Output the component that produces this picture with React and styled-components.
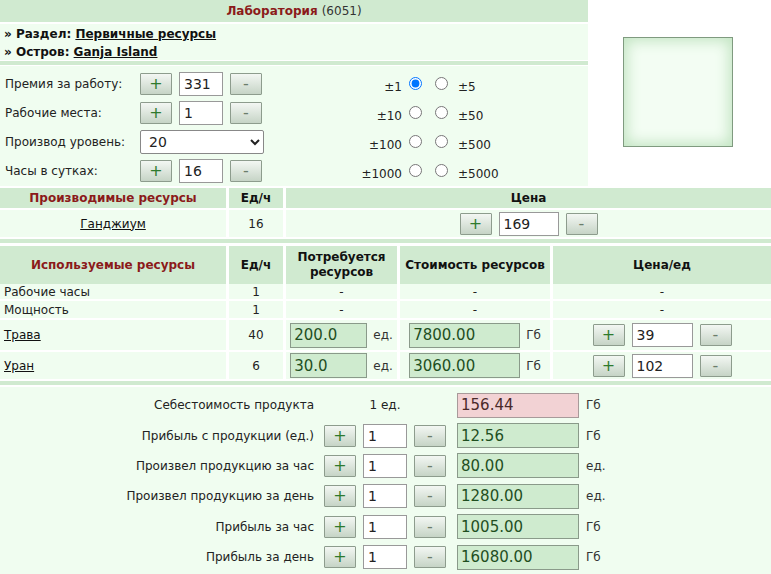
import React from 'react';
import styled, { createGlobalStyle } from 'styled-components';

const HEAD = '#d0ead0';
const LIGHT = '#f0fdf0';

const GlobalStyle = createGlobalStyle`
  html, body {
    margin: 0;
    padding: 0;
    background: #fff;
  }
  body {
    font-family: "DejaVu Sans", Verdana, sans-serif;
    font-size: 12px;
    color: #222;
  }
`;

const Page = styled.div`
  display: flex;
  flex-direction: column;
  width: 100%;
  min-height: 574px;
`;

const Top = styled.div`
  display: flex;
  height: 186px;
`;

const LeftBlock = styled.div`
  width: 588px;
  display: flex;
  flex-direction: column;
`;

const TitleBar = styled.div`
  height: 22px;
  background: ${HEAD};
  display: flex;
  align-items: center;
  justify-content: center;
`;

const TitleName = styled.b`
  color: #8b1a1a;
`;

const TitleCount = styled.span`
  color: #333;
  margin-left: 4px;
`;

const Info = styled.div`
  margin-top: 2px;
  height: 36px;
  background: ${LIGHT};
  padding: 1px 4px 0;
  box-sizing: border-box;
  line-height: 18px;
  font-weight: bold;
  color: #111;
`;

const Link = styled.a`
  color: #111;
  text-decoration: underline;
  cursor: pointer;
`;

const Sep = styled.div`
  height: 4px;
  background: ${HEAD};
  margin: ${(p) => p.$m || '1px 0'};
`;

const Controls = styled.div`
  flex: 1;
  background: ${LIGHT};
  display: flex;
  padding-top: 3px;
`;

const Fields = styled.div`
  width: 290px;
  display: grid;
  grid-auto-rows: 29px;
  align-content: start;
`;

const FieldRow = styled.div`
  display: flex;
  align-items: center;
`;

const FieldLabel = styled.div`
  width: 140px;
  padding-left: 5px;
  box-sizing: border-box;
`;

const Stepper = styled.div`
  display: flex;
  align-items: center;
  gap: 7px;
`;

const Btn = styled.button`
  width: 32px;
  height: 22px;
  padding: 0;
  border: 1px solid #8d9c8d;
  border-radius: 1px;
  background: linear-gradient(#f3f7f3, #c6d4c6);
  font-family: "DejaVu Sans", Verdana, sans-serif;
  font-size: 16px;
  line-height: 18px;
  color: ${(p) => (p.$minus ? '#6b7d6b' : '#2e7a2e')};
  cursor: pointer;
`;

const NumInput = styled.input`
  width: ${(p) => p.$w || 44}px;
  height: 24px;
  box-sizing: border-box;
  border: 1px solid #999;
  background: #fff;
  padding: 0 4px;
  font-family: "DejaVu Sans", Verdana, sans-serif;
  font-size: 14px;
  color: #222;
  outline: none;
`;

const LevelSelect = styled.select`
  width: 124px;
  height: 24px;
  box-sizing: border-box;
  border: 1px solid #888;
  border-radius: 2px;
  background: #fff;
  padding: 0 4px;
  font-family: "DejaVu Sans", Verdana, sans-serif;
  font-size: 14px;
  color: #222;
`;

const Radios = styled.div`
  margin-left: 56px;
  display: grid;
  grid-template-columns: 56px 26px 26px 60px;
  grid-auto-rows: 29px;
  align-content: start;
`;

const RadioText = styled.span`
  display: flex;
  align-items: center;
  justify-content: ${(p) => (p.$right ? 'flex-end' : 'flex-start')};
  padding-top: 6px;
  padding-left: ${(p) => (p.$right ? 0 : 4)}px;
`;

const RadioCell = styled.label`
  display: flex;
  align-items: center;
  justify-content: center;

  input {
    margin: 0;
    width: 13px;
    height: 13px;
  }
`;

const ImageCell = styled.div`
  flex: 1;
  display: flex;
  align-items: center;
  justify-content: center;
  background: #fff;
`;

const Picture = styled.div`
  width: 110px;
  height: 110px;
  box-sizing: border-box;
  border: 1px solid #7f9a7f;
  background: #f3fdf3;
  box-shadow: inset 0 0 14px 3px #c2e4c2;
  margin-right: 3px;
  margin-bottom: 3px;
`;

const Row = styled.div`
  display: grid;
  grid-template-columns: ${(p) => p.$cols};
  column-gap: ${(p) => p.$gap || 3}px;
  height: ${(p) => p.$h}px;
  margin-top: ${(p) => (p.$mt === undefined ? 2 : p.$mt)}px;
`;

const HeadCell = styled.div`
  background: ${HEAD};
  display: flex;
  align-items: center;
  justify-content: center;
  text-align: center;
  font-weight: bold;
  line-height: 15px;
  color: ${(p) => (p.$red ? '#8b1a1a' : '#111')};
`;

const Cell = styled.div`
  background: ${LIGHT};
  display: flex;
  align-items: center;
  justify-content: ${(p) => p.$align || 'center'};
  padding: 0 ${(p) => (p.$align === 'flex-start' ? 4 : 0)}px;
`;

const ValueBox = styled.div`
  width: ${(p) => p.$w}px;
  height: 25px;
  box-sizing: border-box;
  border: 1px solid ${(p) => (p.$pink ? '#a89a9a' : '#8a9a8a')};
  background: ${(p) => (p.$pink ? '#f2d2d4' : '#cfebcf')};
  color: ${(p) => (p.$pink ? '#4a2a2a' : '#1f4f1f')};
  display: flex;
  align-items: center;
  padding-left: 3px;
  font-size: 15px;
`;

const Unit = styled.span`
  margin-left: ${(p) => p.$ml || 6}px;
  color: #333;
`;

const Bottom = styled.div`
  flex: 1;
  background: ${LIGHT};
  margin-top: 2px;
  padding-top: 3px;
`;

const CalcRow = styled.div`
  display: grid;
  grid-template-columns: 316px 134px 126px 1fr;
  column-gap: 2px;
  height: 30.4px;
  align-items: center;
`;

const CalcLabel = styled.div`
  text-align: right;
  padding-right: 2px;
`;

const CalcControls = styled.div`
  display: flex;
  justify-content: center;
  align-items: center;
  gap: 7px;
`;

const CalcValue = styled.div`
  padding-left: 3px;
`;

const Plain = styled.span`
  color: #222;
`;

const fields = [
  { label: 'Премия за работу:', value: '331' },
  { label: 'Рабочие места:', value: '1' },
  { label: 'Производ уровень:', select: '20' },
  { label: 'Часы в сутках:', value: '16' },
];

const steps = [
  ['1', '5'],
  ['10', '50'],
  ['100', '500'],
  ['1000', '5000'],
];

const used = [
  { name: 'Рабочие часы', rate: '1', h: 15, mt: 0 },
  { name: 'Мощность', rate: '1', h: 17 },
  { name: 'Трава', rate: '40', link: true, need: '200.0', cost: '7800.00', price: '39', h: 30 },
  { name: 'Уран', rate: '6', link: true, need: '30.0', cost: '3060.00', price: '102', h: 27 },
];

const calc = [
  { label: 'Себестоимость продукта', fixed: true, value: '156.44', unit: 'Гб', pink: true },
  { label: 'Прибыль с продукции (ед.)', value: '12.56', unit: 'Гб' },
  { label: 'Произвел продукцию за час', value: '80.00', unit: 'ед.' },
  { label: 'Произвел продукцию за день', value: '1280.00', unit: 'ед.' },
  { label: 'Прибыль за час', value: '1005.00', unit: 'Гб' },
  { label: 'Прибыль за день', value: '16080.00', unit: 'Гб' },
];

const Step = ({ value, w }) => (
  <Stepper>
    <Btn type="button">+</Btn>
    <NumInput defaultValue={value} $w={w} />
    <Btn type="button" $minus>-</Btn>
  </Stepper>
);

const USED_COLS = '226px 54px 111px 150px 1fr';

export default function App() {
  return (
    <Page>
      <GlobalStyle />
      <Top>
        <LeftBlock>
          <TitleBar>
            <TitleName>Лаборатория</TitleName>
            <TitleCount>(6051)</TitleCount>
          </TitleBar>
          <Info>
            <div>» Раздел: <Link>Первичные ресурсы</Link></div>
            <div>» Остров: <Link>Ganja Island</Link></div>
          </Info>
          <Sep />
          <Controls>
            <Fields>
              {fields.map((f) => (
                <FieldRow key={f.label}>
                  <FieldLabel>{f.label}</FieldLabel>
                  {f.select ? (
                    <LevelSelect defaultValue={f.select}>
                      {Array.from({ length: 20 }, (_, i) => (
                        <option key={i} value={String(i + 1)}>{i + 1}</option>
                      ))}
                    </LevelSelect>
                  ) : (
                    <Step value={f.value} />
                  )}
                </FieldRow>
              ))}
            </Fields>
            <Radios>
              {steps.map(([a, b]) => (
                <React.Fragment key={a}>
                  <RadioText $right>±{a}</RadioText>
                  <RadioCell><input type="radio" name="step" defaultChecked={a === '1'} /></RadioCell>
                  <RadioCell><input type="radio" name="step" /></RadioCell>
                  <RadioText>±{b}</RadioText>
                </React.Fragment>
              ))}
            </Radios>
          </Controls>
        </LeftBlock>
        <ImageCell>
          <Picture />
        </ImageCell>
      </Top>

      <Row $cols="226px 54px 1fr" $h={20}>
        <HeadCell $red>Производимые ресурсы</HeadCell>
        <HeadCell>Ед/ч</HeadCell>
        <HeadCell>Цена</HeadCell>
      </Row>
      <Row $cols="226px 54px 1fr" $h={27}>
        <Cell><Link as="span">Ганджиум</Link></Cell>
        <Cell>16</Cell>
        <Cell><Step value="169" w={60} /></Cell>
      </Row>

      <Sep $m="2px 0 1px" />

      <Row $cols={USED_COLS} $h={38}>
        <HeadCell $red>Используемые ресурсы</HeadCell>
        <HeadCell>Ед/ч</HeadCell>
        <HeadCell>Потребуется<br />ресурсов</HeadCell>
        <HeadCell>Стоимость ресурсов</HeadCell>
        <HeadCell>Цена/ед</HeadCell>
      </Row>
      {used.map((r) => (
        <Row key={r.name} $cols={USED_COLS} $h={r.h} $mt={r.mt}>
          <Cell $align="flex-start">
            {r.link ? <Link as="span">{r.name}</Link> : <Plain>{r.name}</Plain>}
          </Cell>
          <Cell>{r.rate}</Cell>
          {r.need ? (
            <>
              <Cell><ValueBox $w={77}>{r.need}</ValueBox><Unit>ед.</Unit></Cell>
              <Cell><ValueBox $w={111}>{r.cost}</ValueBox><Unit>Гб</Unit></Cell>
              <Cell><Step value={r.price} w={61} /></Cell>
            </>
          ) : (
            <>
              <Cell>-</Cell>
              <Cell>-</Cell>
              <Cell>-</Cell>
            </>
          )}
        </Row>
      ))}

      <Sep $m="2px 0 0" />

      <Bottom>
        {calc.map((c) => (
          <CalcRow key={c.label}>
            <CalcLabel>{c.label}</CalcLabel>
            <CalcControls>
              {c.fixed ? <span>1 ед.</span> : <Step value="1" />}
            </CalcControls>
            <CalcValue>
              <ValueBox $w={122} $pink={c.pink}>{c.value}</ValueBox>
            </CalcValue>
            <Unit $ml={4}>{c.unit}</Unit>
          </CalcRow>
        ))}
      </Bottom>
    </Page>
  );
}
